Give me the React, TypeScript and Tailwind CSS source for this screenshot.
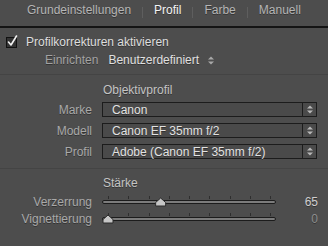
import React from 'react';

const shadow = '[text-shadow:0_1px_0_rgba(0,0,0,0.35)]';

const UpDown: React.FC<{ className?: string }> = ({ className }) => (
  <svg width="6" height="9" viewBox="0 0 6 9" className={className}>
    <path d="M0 3.5 L3 0.5 L6 3.5 Z" fill="currentColor" />
    <path d="M0 5.5 L3 8.5 L6 5.5 Z" fill="currentColor" />
  </svg>
);

const Select: React.FC<{ label: string; value: string }> = ({ label, value }) => (
  <div className="flex items-center h-[15px]">
    <div className={`w-[92px] text-right text-[#a9a9a9] ${shadow}`}>{label}</div>
    <div className="ml-[10px] w-[215px] h-[15px] flex border border-[#1c1c1c] bg-[#4a4a4a]">
      <div className={`flex-1 flex items-center pl-[9px] text-[#e2e2e2] ${shadow}`}>{value}</div>
      <div className="w-[14px] flex items-center justify-center border-l border-[#1c1c1c] text-[#b8b8b8]">
        <UpDown />
      </div>
    </div>
  </div>
);

const Slider: React.FC<{ label: string; value: number; dim?: boolean }> = ({ label, value, dim }) => {
  const cx = 6 + (value / 200) * 162;
  const ticks = Array.from({ length: 9 }, (_, i) => 6 + i * 20.25);
  return (
    <div className="flex items-center h-[14px]">
      <div className={`w-[92px] text-right text-[#a9a9a9] ${shadow}`}>{label}</div>
      <svg width="174" height="14" viewBox="0 0 174 14" className="ml-[10px] shrink-0">
        {ticks.map((x) => (
          <line key={x} x1={Math.round(x) + 0.5} y1="1" x2={Math.round(x) + 0.5} y2="4" stroke="#2e2e2e" strokeWidth="1" />
        ))}
        <rect x="0.5" y="5.5" width="173" height="3" rx="1.5" fill="#7c7c7c" stroke="#1c1c1c" strokeWidth="1" />
        <path
          d={`M${cx} 3 L${cx + 5} 7.5 L${cx + 5} 11 L${cx - 5} 11 L${cx - 5} 7.5 Z`}
          fill="#c6c6c6"
          stroke="#2a2a2a"
          strokeWidth="1"
          strokeLinejoin="round"
        />
      </svg>
      <div className={`flex-1 text-right pr-[10px] ${dim ? 'text-[#8e8e8e]' : 'text-[#cfcfcf]'} ${shadow}`}>
        {value}
      </div>
    </div>
  );
};

const Divider: React.FC<{ className?: string }> = ({ className }) => (
  <div className={`h-px bg-[#444444] ${className ?? ''}`} />
);

const App: React.FC = () => {
  const tabs = ['Grundeinstellungen', 'Profil', 'Farbe', 'Manuell'];

  return (
    <div className="w-[328px] h-[246px] bg-[#4d4d4d] overflow-hidden text-[12px] leading-[14px] font-['Liberation_Sans',Arial,sans-serif]">
      {/* Tabs */}
      <div className="h-[28px] border-b-2 border-[#141414] flex items-start pt-[3px] pl-[27px] gap-[11px]">
        {tabs.map((t, i) => (
          <React.Fragment key={t}>
            {i > 0 && <div className="w-px h-[11px] mt-[4px] bg-[#5e5e5e]" />}
            <span className={`${t === 'Profil' ? 'text-[#f4f4f4]' : 'text-[#b5b5b5]'} ${shadow}`}>{t}</span>
          </React.Fragment>
        ))}
      </div>

      {/* Enable checkbox */}
      <div className="mt-[7px] h-[14px] flex items-center pl-[5px]">
        <svg width="14" height="14" viewBox="0 0 14 14">
          <rect x="1.5" y="2.5" width="10" height="10" fill="#333333" stroke="#111111" strokeWidth="1" />
          <path d="M3.5 7 L6 10 L11.5 1" fill="none" stroke="#f2f2f2" strokeWidth="1.6" strokeLinecap="round" strokeLinejoin="round" />
        </svg>
        <span className={`ml-[7px] text-[#dedede] ${shadow}`}>Profilkorrekturen aktivieren</span>
      </div>

      {/* Setup */}
      <div className="mt-[4px] h-[14px] flex items-center pl-[45px]">
        <span className={`text-[#a3a3a3] ${shadow}`}>Einrichten</span>
        <span className={`ml-[10px] text-[#e0e0e0] ${shadow}`}>Benutzerdefiniert</span>
        <UpDown className="ml-[9px] text-[#a8a8a8]" />
      </div>

      <Divider className="mt-[7px]" />

      {/* Lens profile */}
      <div className={`mt-[8px] pl-[103px] text-[#c4c4c4] ${shadow}`}>Objektivprofil</div>
      <div className="mt-[5px] flex flex-col gap-[6px]">
        <Select label="Marke" value="Canon" />
        <Select label="Modell" value="Canon EF 35mm f/2" />
        <Select label="Profil" value="Adobe (Canon EF 35mm f/2)" />
      </div>

      <Divider className="mt-[9px]" />

      {/* Amount */}
      <div className={`mt-[7px] pl-[103px] text-[#c4c4c4] ${shadow}`}>Stärke</div>
      <div className="mt-[5px]">
        <Slider label="Verzerrung" value={65} />
      </div>
      <div className="mt-[3px]">
        <Slider label="Vignettierung" value={0} dim />
      </div>
    </div>
  );
};

export default App;
